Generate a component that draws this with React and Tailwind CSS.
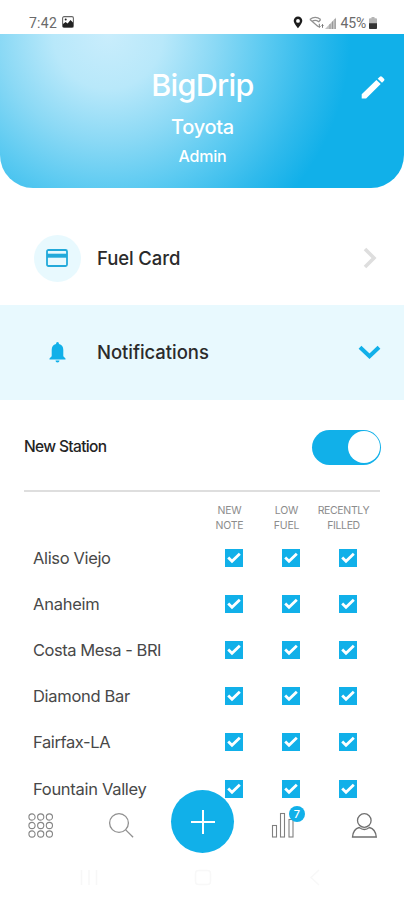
const stations = [
  { name: 'Aliso Viejo', tracking: 'tracking-[-0.35px]' },
  { name: 'Anaheim', tracking: 'tracking-[-0.25px]' },
  { name: 'Costa Mesa - BRI', tracking: 'tracking-[-0.45px]' },
  { name: 'Diamond Bar', tracking: 'tracking-[-0.3px]' },
  { name: 'Fairfax-LA', tracking: 'tracking-[-0.4px]' },
  { name: 'Fountain Valley', tracking: 'tracking-[-0.3px]' },
];

function StatusBar() {
  return (
    <div className="flex h-[34px] items-end justify-between pb-[3px] pl-[29px] pr-[27px] font-['Roboto',sans-serif] text-[14px] leading-[16px] text-[#6a6a6a]">
      <div className="flex items-center gap-[5px]">
        <span className="tracking-[0.25px]">7:42</span>
        <svg className="mb-[2px]" width="12" height="12" viewBox="0 0 12 12">
          <rect x="0.6" y="0.6" width="10.8" height="10.8" rx="1.5" fill="#fff" stroke="#666" strokeWidth="1.1" />
          <path d="M1 8l2.6-2 2 1.5L8.5 4 11 6.5V11H1z" fill="#222" />
          <circle cx="3.7" cy="3.6" r="1" fill="#222" />
        </svg>
      </div>
      <div className="flex items-center">
        <svg className="mb-[1px]" width="10" height="13" viewBox="0 0 10 13">
          <path fillRule="evenodd" d="M5 .5A4.3 4.3 0 0 0 .7 4.8C.7 7.5 5 12.3 5 12.3s4.3-4.8 4.3-7.5A4.3 4.3 0 0 0 5 .5zm0 2.5a1.9 1.9 0 1 1 0 3.8A1.9 1.9 0 0 1 5 3z" fill="#1c1c1c" />
        </svg>
        <svg className="mb-[1px] ml-[6px]" width="15" height="13" viewBox="0 0 15 13">
          <path d="M.8 3.5Q6.2-.9 11.7 3.5M2.8 5.7q3.4-2.6 6.9 0M1 3.5l8 7M11.7 3.5 9.5 6" fill="none" stroke="#909090" strokeWidth="1.2" />
          <path d="M10.3 7.8v3.6m-1.2-1.2 1.2 1.2 1.2-1.2M13.5 11.8V8.5m-1 1 1-1 1 1" fill="none" stroke="#777" strokeWidth="1" />
        </svg>
        <svg className="mb-[1px] ml-px" width="12" height="12" viewBox="0 0 12 12">
          <path d="M0 12 11 .5V12z" fill="#c4c4c4" />
          <path d="M5 7v5M7.5 4.5V12M10.2 2v10" stroke="#999" />
        </svg>
        <span className="ml-[4px] tracking-[-0.2px]">45%</span>
        <svg className="mb-[1px] ml-[3px]" width="8" height="12" viewBox="0 0 8 12">
          <path d="M2.5 0h3v1.3H7q1 0 1 1V11q0 1-1 1H1q-1 0-1-1V2.3q0-1 1-1h1.5z" fill="#b5b5b5" />
          <path d="M0 6.3h8V11q0 1-1 1H1q-1 0-1-1z" fill="#333" />
        </svg>
      </div>
    </div>
  );
}

function Header() {
  return (
    <header className="relative flex h-[154px] flex-col items-center rounded-b-[33px] bg-[radial-gradient(circle_250px_at_108px_0px,#c9edfc_0%,#b8e8fa_22%,#8bd9f5_43%,#5bcaf1_63%,#30baec_82%,#11b0e9_97%)] text-white">
      <h1 className="mt-[31px] pl-[1px] text-[30.5px] font-medium leading-[40px] tracking-[-0.7px]">BigDrip</h1>
      <p className="mt-[9px] pl-[1px] text-[20px] font-medium leading-[26px] tracking-[-0.3px]">Toyota</p>
      <p className="mt-[5px] pl-[1px] text-[16px] font-medium leading-[22px] tracking-[-0.2px]">Admin</p>
      <svg className="absolute right-[19px] top-[41px]" width="24" height="25" viewBox="0 0 24 25">
        <path d="M.7 19.2 15.4 5l4.3 4.1L5.1 23.4H.7zM16.7 3.7l2.1-2q1.1-1 2.2 0l2 2q1 1 0 2.1l-2 2z" fill="#fff" />
      </svg>
    </header>
  );
}

function Check() {
  return (
    <span className="flex h-[18px] w-[18px] items-center justify-center bg-[#11b0e9]">
      <svg width="14" height="12" viewBox="0 0 14 12">
        <path d="M1.2 5.6 5 9.300 12.800 1.800" fill="none" stroke="#fff" strokeWidth="2.8" />
      </svg>
    </span>
  );
}

function BottomNav() {
  return (
    <nav className="absolute inset-x-0 bottom-0 h-[100px]">
      <div className="relative h-full">
        <svg className="absolute left-[28px] top-[13px]" width="26" height="26" viewBox="0 0 26 26" fill="none" stroke="#858585" strokeWidth="1.1">
          {[4, 12.5, 21].map((y) =>
            [4, 12.7, 21.4].map((x) => <circle key={`${x}-${y}`} cx={x} cy={y} r="3.1" />)
          )}
        </svg>
        <svg className="absolute left-[108px] top-[12px]" width="26" height="27" viewBox="0 0 26 27" fill="none" stroke="#909090" strokeWidth="1.3">
          <circle cx="11" cy="11" r="9.4" />
          <path d="m17.7 17.9 7.4 7.3" />
        </svg>
        <button className="absolute left-[171px] top-[-10px] flex h-[63px] w-[63px] items-center justify-center rounded-full bg-[#11b0e9]">
          <svg width="26" height="26" viewBox="0 0 26 26">
            <path d="M13 1v24M1 13h24" stroke="#fff" strokeWidth="2" />
          </svg>
        </button>
        <svg className="absolute left-[271px] top-[12px]" width="24" height="26" viewBox="0 0 24 26" fill="none" stroke="#808080" strokeWidth="1.1">
          <rect x="1.500" y="13.500" width="4" height="11.500" />
          <rect x="9.500" y="1.500" width="4" height="23.500" />
          <rect x="18" y="7.500" width="4" height="17.500" />
        </svg>
        <span className="absolute left-[289px] top-[6px] flex h-[16px] w-[16px] items-center justify-center rounded-full bg-[#11b0e9] text-[11px] font-medium leading-none text-white">
          7
        </span>
        <svg className="absolute left-[351px] top-[12px]" width="27" height="27" viewBox="0 0 27 27" fill="none" stroke="#6f6f6f" strokeWidth="1.3">
          <circle cx="13.300" cy="8.500" r="6.800" />
          <path d="M8.200 15.500Q2.200 17 1.500 25h23.800q-.8-8-6.900-9.500-5 4-10.200 0z" />
        </svg>
        <svg className="absolute left-[80px] top-[69px]" width="18" height="17" viewBox="0 0 18 17" stroke="#f7f7f7" strokeWidth="1.5">
          <path d="M1.500 1v15M9 1v15M16.500 1v15" />
        </svg>
        <svg className="absolute left-[194px] top-[69px]" width="18" height="17" viewBox="0 0 18 17" fill="none" stroke="#f8f8f8" strokeWidth="1.5">
          <rect x="1.500" y="1.500" width="15" height="14" rx="3" />
        </svg>
        <svg className="absolute left-[309px] top-[69px]" width="12" height="17" viewBox="0 0 12 17" fill="none" stroke="#f8f8f8" strokeWidth="1.5">
          <path d="M10 1 2 8.500l8 7.500" />
        </svg>
      </div>
    </nav>
  );
}

export default function App() {
  return (
    <div className="relative h-[900px] w-[404px] overflow-hidden bg-white font-['Inter',sans-serif]">
      <StatusBar />
      <Header />

      <section className="mt-[23px] flex h-[94px] items-center pl-[34px] pr-[26px]">
        <span className="flex h-[47px] w-[47px] items-center justify-center rounded-full bg-[#e8f9fe]">
          <svg className="mr-[1px]" width="22" height="18" viewBox="0 0 22 18">
            <rect x="1" y="1" width="20" height="16" rx="1.5" fill="none" stroke="#22a9da" strokeWidth="1.8" />
            <path d="M1 4.700h20v4H1z" fill="#22a9da" />
          </svg>
        </span>
        <span className="ml-[16px] text-[18.5px] font-medium leading-[24px] tracking-[-0.1px] text-[#2b2b2b]">Fuel Card</span>
        <svg className="ml-auto" width="15" height="22" viewBox="0 0 15 22">
          <path d="m2 2 9 9-9 9" fill="none" stroke="#dedede" strokeWidth="3.6" />
        </svg>
      </section>

      <section className="flex h-[95px] items-center bg-[#e8f9fe] pl-[49px] pr-[23px]">
        <svg width="17" height="21" viewBox="0 0 17 21">
          <path d="M8.500 0q1.500 0 1.500 2 4.300 1.100 4.300 6v6.200l2.200 2.200v1.100H.5v-1.100l2.200-2.200V8Q2.700 3.100 7 2q0-2 1.500-2zM6.500 18.600h4q0 2-2 2t-2-2z" fill="#11b0e9" />
        </svg>
        <span className="mb-[2px] ml-[31px] text-[18.5px] font-medium leading-[24px] tracking-[-0.05px] text-[#2b2b2b]">Notifications</span>
        <svg className="ml-auto" width="23" height="15" viewBox="0 0 23 15">
          <path d="m2 2.300 9.500 9L21 2.300" fill="none" stroke="#11b0e9" strokeWidth="4" />
        </svg>
      </section>

      <section className="mx-[24px] flex h-[92px] items-center justify-between border-b-2 border-[#dedede] text-[#242424]">
        <span className="pt-[4px] text-[15.5px] font-medium leading-[20px] tracking-[-0.65px]">New Station</span>
        <span className="mr-[-1px] mt-[4px] flex h-[35px] w-[69px] items-center justify-end rounded-full bg-[#11b0e9] pr-[1px]">
          <span className="h-[32px] w-[32px] rounded-full bg-white" />
        </span>
      </section>

      <div className="mt-[11px] flex justify-end pr-[32px]">
        <div className="grid grid-cols-[57px_57px_57px] text-center text-[10.5px] font-normal leading-[15px] tracking-[-0.2px] text-[#8c8c8c]">
          <span>NEW<br />NOTE</span>
          <span>LOW<br />FUEL</span>
          <span className="tracking-[-0.35px]">RECENTLY<br />FILLED</span>
        </div>
      </div>

      <ul className="mt-[2px]">
        {stations.map((s) => (
          <li key={s.name} className="flex h-[46.100px] items-center justify-between pl-[33px] pr-[28px]">
            <span className={`text-[16.5px] font-normal leading-[22px] text-[#484848] ${s.tracking}`}>{s.name}</span>
            <span className="grid grid-cols-[57px_57px_57px] justify-items-center">
              <Check />
              <Check />
              <Check />
            </span>
          </li>
        ))}
      </ul>

      <BottomNav />
    </div>
  );
}
